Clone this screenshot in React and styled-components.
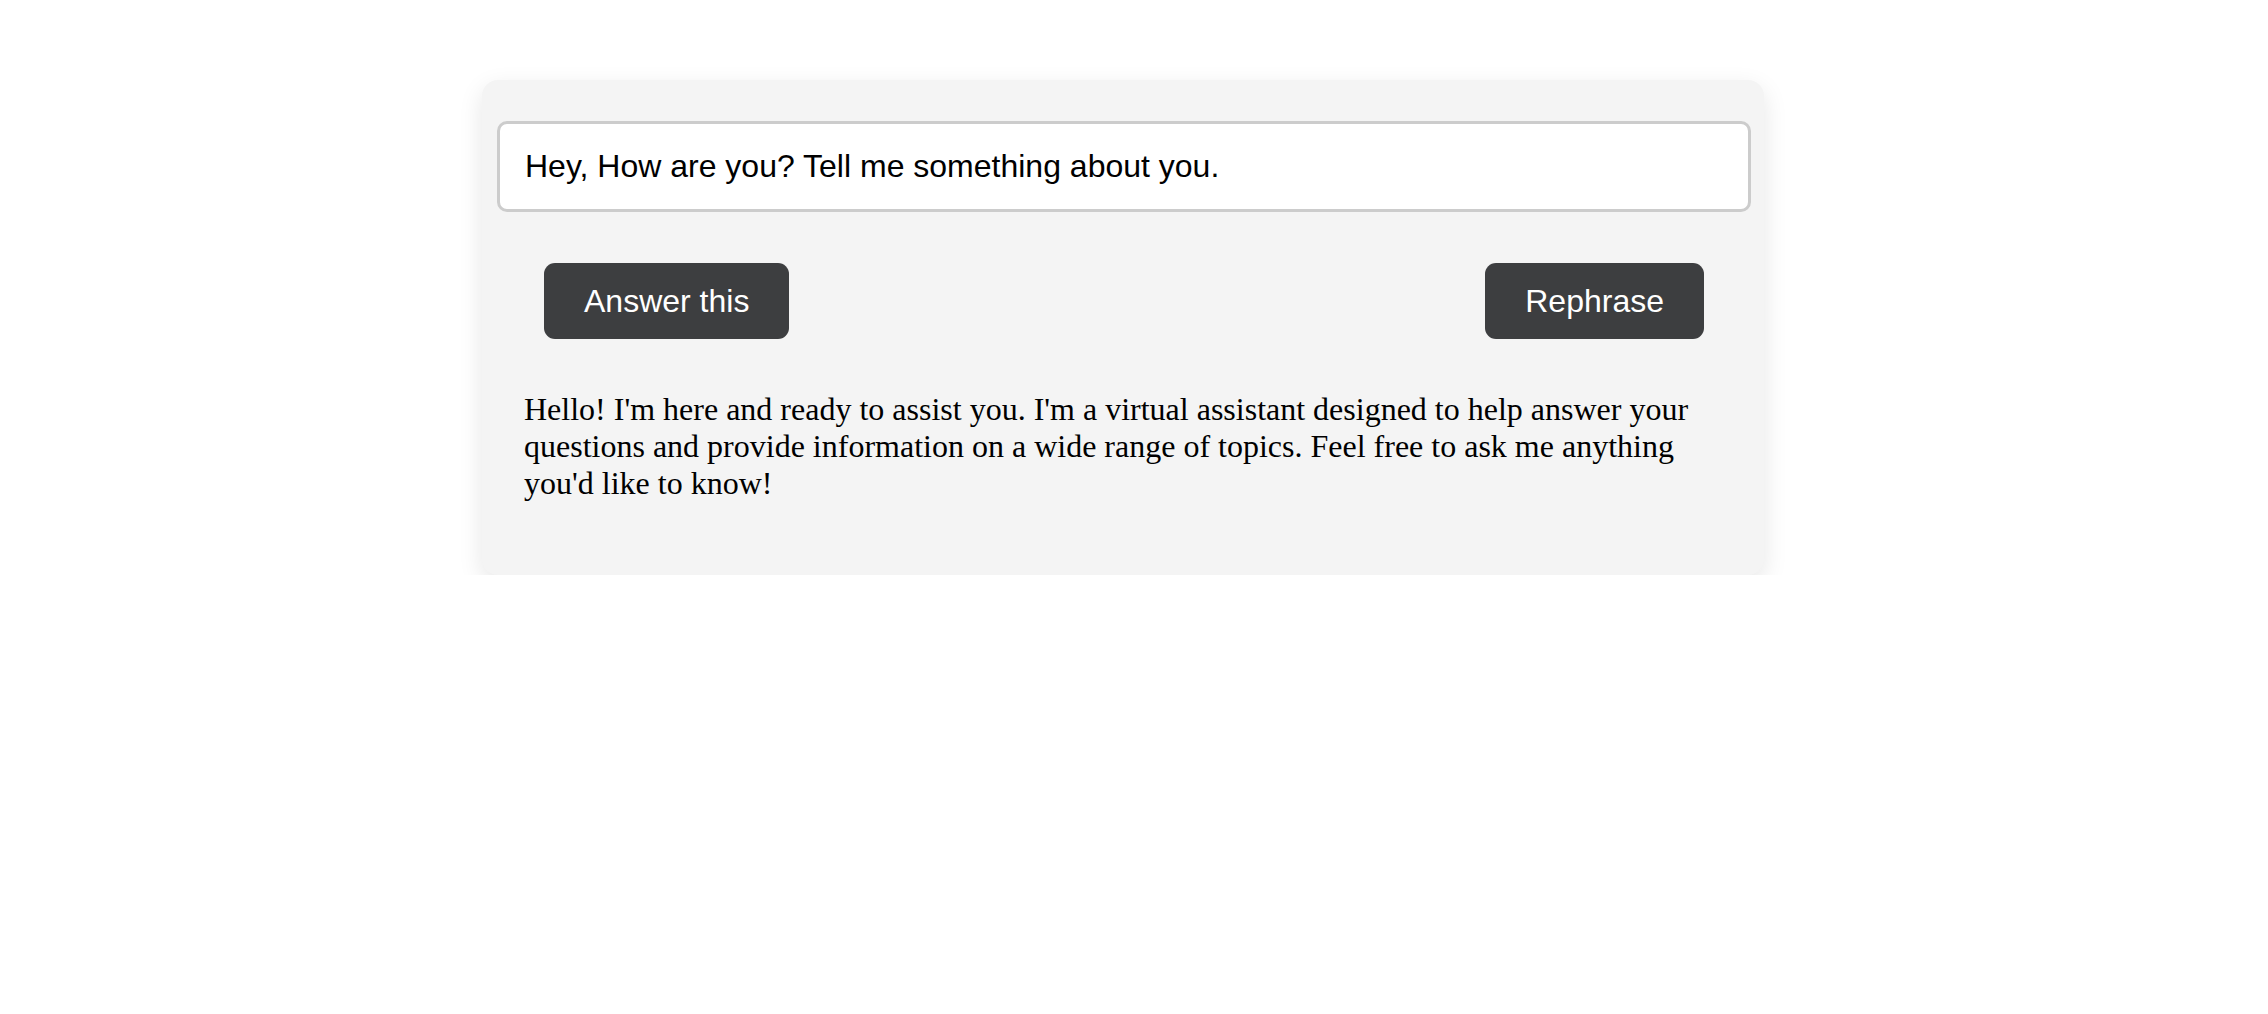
import styled, { createGlobalStyle } from "styled-components"
import { useState } from "react"

const GlobalStyle = createGlobalStyle`
  body {
    margin: 0;
    background: #ffffff;
    font-family: "Liberation Serif", "Times New Roman", serif;
  }
`

const Page = styled.div`
  display: flex;
  justify-content: center;
  padding: 80px 22px 0 0;
`

const Card = styled.div`
  width: 1282px;
  box-sizing: border-box;
  padding: 41px 13px 73px 15px;
  background: #f4f4f4;
  border-radius: 16px;
  box-shadow: 0 8px 24px rgba(0, 0, 0, 0.1);
  display: flex;
  flex-direction: column;
`

const PromptInput = styled.input`
  width: 100%;
  height: 91px;
  box-sizing: border-box;
  padding: 0 25px;
  border: 3px solid #cccccc;
  border-radius: 10px;
  background: #ffffff;
  color: #000000;
  font-family: "Liberation Sans", Arial, sans-serif;
  font-size: 32px;
  outline: none;
`

const ButtonRow = styled.div`
  display: flex;
  justify-content: space-between;
  padding: 0 47px;
  margin-top: 51px;
`

const ActionButton = styled.button`
  height: 76px;
  padding: 0 40px;
  border: none;
  border-radius: 11px;
  background: #3d3e40;
  color: #ffffff;
  font-family: "Liberation Sans", Arial, sans-serif;
  font-size: 32px;
  cursor: pointer;
`

const Answer = styled.p`
  margin: 52px 0 0;
  padding: 0 27px;
  font-size: 32px;
  line-height: 37px;
  color: #000000;
`

const App = () => {
  const [prompt, setPrompt] = useState("Hey, How are you? Tell me something about you.")

  return (
    <Page>
      <GlobalStyle />
      <Card>
        <PromptInput value={prompt} onChange={e => setPrompt(e.target.value)} />
        <ButtonRow>
          <ActionButton>Answer this</ActionButton>
          <ActionButton>Rephrase</ActionButton>
        </ButtonRow>
        <Answer>
          Hello! I'm here and ready to assist you. I'm a virtual assistant designed to help answer your questions and provide information on a wide range of topics. Feel free to ask me anything you'd like to know!
        </Answer>
      </Card>
    </Page>
  )
}

export default App
